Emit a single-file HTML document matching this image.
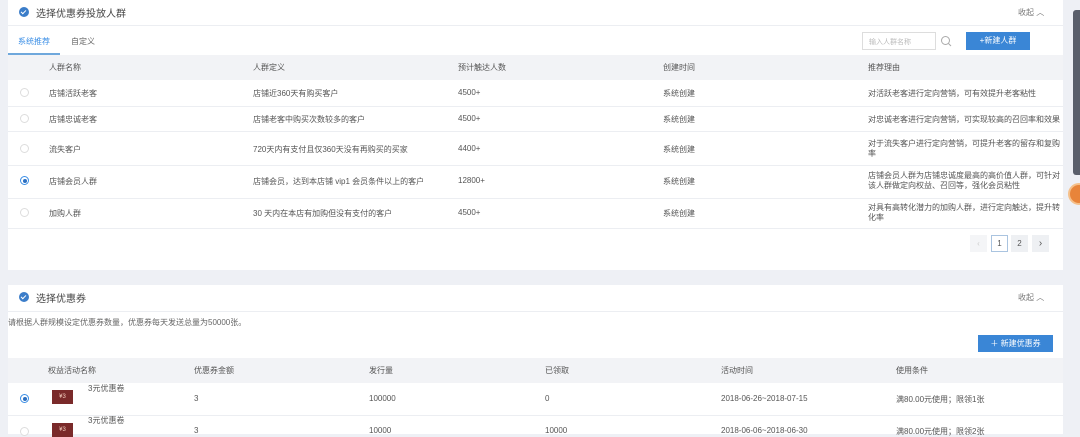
<!DOCTYPE html><html><head><meta charset="utf-8"><style>
*{margin:0;padding:0;box-sizing:border-box}
body{width:1080px;height:434px;background:#eef0f5;font-family:"Liberation Sans","Noto Sans CJK SC",sans-serif;color:#555;overflow:hidden;position:relative;font-size:8px}
.a{position:absolute;white-space:nowrap}
.p{position:absolute;background:#fff;left:8px;width:1055px}
.hd{position:absolute;left:0;width:1055px;background:#f2f3f6}
.ln{position:absolute;left:0;width:1055px;height:1px;background:#eceef2}
.r{position:absolute;width:9px;height:9px;border:1px solid #ddd;border-radius:50%;background:#fff}
.r.on{border-color:#3a8ee6}.r.on:after{content:"";position:absolute;left:1.5px;top:1.5px;width:4px;height:4px;border-radius:50%;background:#2d6fc0}
.ck{position:absolute;width:10px;height:10px;border-radius:50%;background:#3b7dc9}
.ck:after{content:"";position:absolute;left:3px;top:2px;width:2px;height:4px;border:solid #fff;border-width:0 1.5px 1.5px 0;transform:rotate(45deg)}
.tk{position:absolute;width:21px;height:14px;background:#7a2a2a;color:#f5d0c0;font-size:6px;text-align:center;line-height:14px}
</style></head><body>
<div class="p" style="top:0;height:270px">
 <div class="ck" style="left:11px;top:7px"></div>
 <div class="a" style="left:28px;top:5px;font-size:10px;color:#444">选择优惠券投放人群</div>
 <div class="a" style="left:1010px;top:7px;color:#777">收起 ︿</div>
 <div class="ln" style="top:25px"></div>
 <div class="a" style="left:10px;top:36px;color:#3a8ee6">系统推荐</div>
 <div class="a" style="left:63px;top:36px;color:#666">自定义</div>
 <div style="position:absolute;left:0;top:53px;width:52px;height:2px;background:#6fa8dc"></div>
 <div style="position:absolute;left:854px;top:32px;width:74px;height:18px;border:1px solid #ddd"></div>
 <div class="a" style="left:861px;top:37px;color:#bbb;font-size:7px">输入人群名称</div>
 <svg style="position:absolute;left:932px;top:35px" width="12" height="12"><circle cx="5.5" cy="5.5" r="4" fill="none" stroke="#aaa" stroke-width="1"/><line x1="8.5" y1="8.5" x2="11" y2="11" stroke="#aaa"/></svg>
 <div style="position:absolute;left:958px;top:32px;width:64px;height:18px;background:#3a86d6;color:#fff;text-align:center;line-height:18px">+新建人群</div>
 <div class="hd" style="top:55px;height:25px"></div>
 <div class="a" style="left:41px;top:62px">人群名称</div><div class="a" style="left:245px;top:62px">人群定义</div><div class="a" style="left:450px;top:62px">预计触达人数</div><div class="a" style="left:655px;top:62px">创建时间</div><div class="a" style="left:860px;top:62px">推荐理由</div>
 <div class="r" style="left:12px;top:88px"></div>
 <div class="a" style="left:41px;top:88px">店铺活跃老客</div><div class="a" style="left:245px;top:88px">店铺近360天有购买客户</div><div class="a" style="left:450px;top:88px">4500+</div><div class="a" style="left:655px;top:88px">系统创建</div><div class="a" style="left:860px;top:88px">对活跃老客进行定向营销，可有效提升老客粘性</div>
 <div class="ln" style="top:106px"></div>
 <div class="r" style="left:12px;top:114px"></div>
 <div class="a" style="left:41px;top:114px">店铺忠诚老客</div><div class="a" style="left:245px;top:114px">店铺老客中购买次数较多的客户</div><div class="a" style="left:450px;top:114px">4500+</div><div class="a" style="left:655px;top:114px">系统创建</div><div class="a" style="left:860px;top:114px">对忠诚老客进行定向营销，可实现较高的召回率和效果</div>
 <div class="ln" style="top:131px"></div>
 <div class="r" style="left:12px;top:144px"></div>
 <div class="a" style="left:41px;top:144px">流失客户</div><div class="a" style="left:245px;top:144px">720天内有支付且仅360天没有再购买的买家</div><div class="a" style="left:450px;top:144px">4400+</div><div class="a" style="left:655px;top:144px">系统创建</div><div class="a" style="left:860px;top:139px;line-height:10px">对于流失客户进行定向营销，可提升老客的留存和复购<br>率</div>
 <div class="ln" style="top:165px"></div>
 <div class="r on" style="left:12px;top:176px"></div>
 <div class="a" style="left:41px;top:176px">店铺会员人群</div><div class="a" style="left:245px;top:176px">店铺会员，达到本店铺 vip1 会员条件以上的客户</div><div class="a" style="left:450px;top:176px">12800+</div><div class="a" style="left:655px;top:176px">系统创建</div><div class="a" style="left:860px;top:171px;line-height:10px">店铺会员人群为店铺忠诚度最高的高价值人群，可针对<br>该人群做定向权益、召回等，强化会员粘性</div>
 <div class="ln" style="top:198px"></div>
 <div class="r" style="left:12px;top:208px"></div>
 <div class="a" style="left:41px;top:208px">加购人群</div><div class="a" style="left:245px;top:208px">30 天内在本店有加购但没有支付的客户</div><div class="a" style="left:450px;top:208px">4500+</div><div class="a" style="left:655px;top:208px">系统创建</div><div class="a" style="left:860px;top:203px;line-height:10px">对具有高转化潜力的加购人群，进行定向触达，提升转<br>化率</div>
 <div class="ln" style="top:228px"></div>
 <div style="position:absolute;left:962px;top:235px;width:17px;height:17px;background:#f4f5f7;color:#ccc;text-align:center;line-height:17px">‹</div>
 <div style="position:absolute;left:983px;top:235px;width:17px;height:17px;border:1px solid #aac4e0;text-align:center;line-height:15px">1</div>
 <div style="position:absolute;left:1003px;top:235px;width:17px;height:17px;background:#eef0f3;text-align:center;line-height:17px">2</div>
 <div style="position:absolute;left:1024px;top:235px;width:17px;height:17px;background:#eef0f3;text-align:center;line-height:17px;font-size:10px">›</div>
</div>
<div class="p" style="top:285px;height:149px">
 <div class="ck" style="left:11px;top:7px"></div>
 <div class="a" style="left:28px;top:5px;font-size:10px;color:#444">选择优惠券</div>
 <div class="a" style="left:1010px;top:7px;color:#777">收起 ︿</div>
 <div class="ln" style="top:26px"></div>
 <div class="a" style="left:0px;top:32px;color:#666">请根据人群规模设定优惠券数量，优惠券每天发送总量为50000张。</div>
 <div style="position:absolute;left:970px;top:50px;width:75px;height:17px;background:#3a86d6;color:#fff;text-align:center;line-height:17px">＋ 新建优惠券</div>
 <div class="hd" style="top:73px;height:25px"></div>
 <div class="a" style="left:40px;top:80px">权益活动名称</div><div class="a" style="left:186px;top:80px">优惠券金额</div><div class="a" style="left:361px;top:80px">发行量</div><div class="a" style="left:537px;top:80px">已领取</div><div class="a" style="left:713px;top:80px">活动时间</div><div class="a" style="left:888px;top:80px">使用条件</div>
 <div class="r on" style="left:12px;top:109px"></div>
 <div class="tk" style="left:44px;top:105px">¥3</div>
 <div class="a" style="left:80px;top:98px">3元优惠卷</div><div class="a" style="left:186px;top:109px">3</div><div class="a" style="left:361px;top:109px">100000</div><div class="a" style="left:537px;top:109px">0</div><div class="a" style="left:713px;top:109px">2018-06-26~2018-07-15</div><div class="a" style="left:888px;top:109px">满80.00元使用；限领1张</div>
 <div class="ln" style="top:130px"></div>
 <div class="r" style="left:12px;top:142px"></div>
 <div class="tk" style="left:44px;top:138px">¥3</div>
 <div class="a" style="left:80px;top:130px">3元优惠卷</div><div class="a" style="left:186px;top:141px">3</div><div class="a" style="left:361px;top:141px">10000</div><div class="a" style="left:537px;top:141px">10000</div><div class="a" style="left:713px;top:141px">2018-06-06~2018-06-30</div><div class="a" style="left:888px;top:141px">满80.00元使用；限领2张</div>
</div>
<div style="position:absolute;left:1073px;top:10px;width:7px;height:165px;background:#5a5f6b;border-radius:3px 0 0 3px"></div>
<div style="position:absolute;left:1068px;top:183px;width:22px;height:22px;border-radius:50%;background:#e8843a;border:2px solid #f5c08a"></div>
</body></html>
